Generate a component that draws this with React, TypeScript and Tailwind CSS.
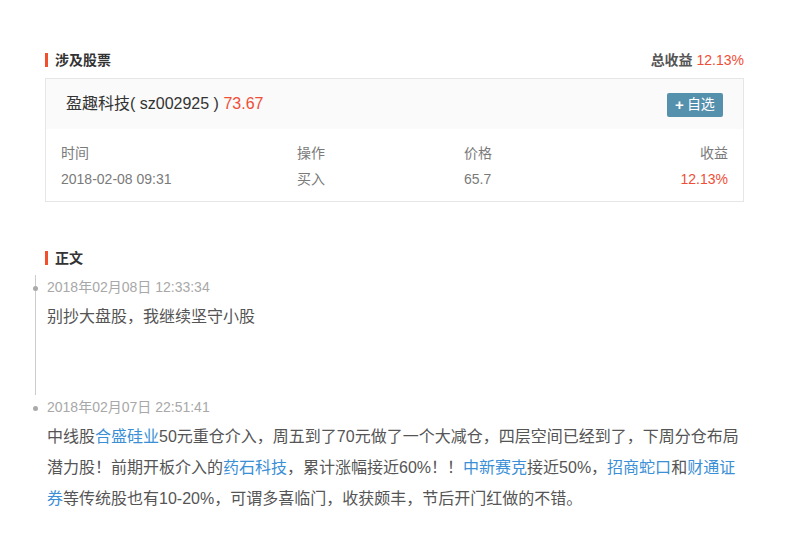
import React from 'react';

const font = { fontFamily: '"Liberation Sans", "Noto Sans CJK SC", sans-serif' };

function SectionTitle({ title, right }: { title: string; right?: React.ReactNode }) {
  return (
    <div className="flex items-center justify-between h-[14px]">
      <div className="flex items-center gap-[7px]">
        <span className="w-[3px] h-[14px] bg-[#f0502d]" />
        <span className="text-[14px] font-bold text-[#333] leading-[14px]">{title}</span>
      </div>
      {right}
    </div>
  );
}

const L = ({ children }: { children: React.ReactNode }) => (
  <a className="text-[#3b8fd6]">{children}</a>
);

export default function App() {
  return (
    <div className="bg-white w-[791px] h-[550px] pl-[45px] pr-[47px] pt-[53px]" style={font}>
      <SectionTitle
        title="涉及股票"
        right={
          <span className="text-[14px] leading-[14px]">
            <b className="text-[#555]">总收益</b> <span className="text-[#f04e36]">12.13%</span>
          </span>
        }
      />

      <div className="mt-[11px] border border-[#e6e6e6]">
        <div className="h-[50px] bg-[#fafafa] flex items-center justify-between pl-[20px] pr-[20px]">
          <span className="text-[16px] text-[#333]">
            盈趣科技( sz002925 ) <span className="text-[#f04e36]">73.67</span>
          </span>
          <button className="w-[56px] h-[24px] mt-[1px] rounded-[2px] bg-[#5590ad] text-white text-[14px] flex items-center justify-center gap-[3px]">
            <span className="font-bold text-[15px] leading-none">+</span>
            <span>自选</span>
          </button>
        </div>
        <div className="px-[15px] pt-[11px] pb-[9px] text-[14px] text-[#7a7a7a]">
          <div className="grid grid-cols-[236px_167px_1fr_auto] h-[26px] leading-[26px]">
            <span>时间</span>
            <span>操作</span>
            <span>价格</span>
            <span className="text-right">收益</span>
          </div>
          <div className="grid grid-cols-[236px_167px_1fr_auto] h-[26px] leading-[26px]">
            <span>2018-02-08 09:31</span>
            <span>买入</span>
            <span>65.7</span>
            <span className="text-right text-[#f04e36]">12.13%</span>
          </div>
        </div>
      </div>

      <div className="mt-[49px]">
        <SectionTitle title="正文" />
      </div>

      <div className="ml-[-10px] mt-[10px]">
        <div className="relative border-l border-[#cccccc] pl-[11px] pt-[2px] h-[120px]">
          <span className="absolute left-[-3px] top-[11px] w-[5px] h-[5px] rounded-full bg-[#aaaaaa]" />
          <div className="text-[14px] leading-[20px] text-[#a8a8a8]">2018年02月08日 12:33:34</div>
          <div className="mt-[4px] text-[16px] leading-[31px] text-[#555]">别抄大盘股，我继续坚守小股</div>
        </div>
        <div className="relative pl-[12px] pt-[2px]">
          <span className="absolute left-[-2px] top-[11px] w-[5px] h-[5px] rounded-full bg-[#aaaaaa]" />
          <div className="text-[14px] leading-[20px] text-[#a8a8a8]">2018年02月07日 22:51:41</div>
          <div className="mt-[4px] text-[16px] leading-[31px] text-[#555] w-[702px]">
            中线股<L>合盛硅业</L>50元重仓介入，周五到了70元做了一个大减仓，四层空间已经到了，下周分仓布局潜力股！前期开板介入的<L>药石科技</L>，累计涨幅接近60%！！<L>中新赛克</L>接近50%，<L>招商蛇口</L>和<L>财通证券</L>等传统股也有10-20%，可谓多喜临门，收获颇丰，节后开门红做的不错。
          </div>
        </div>
      </div>
    </div>
  );
}
